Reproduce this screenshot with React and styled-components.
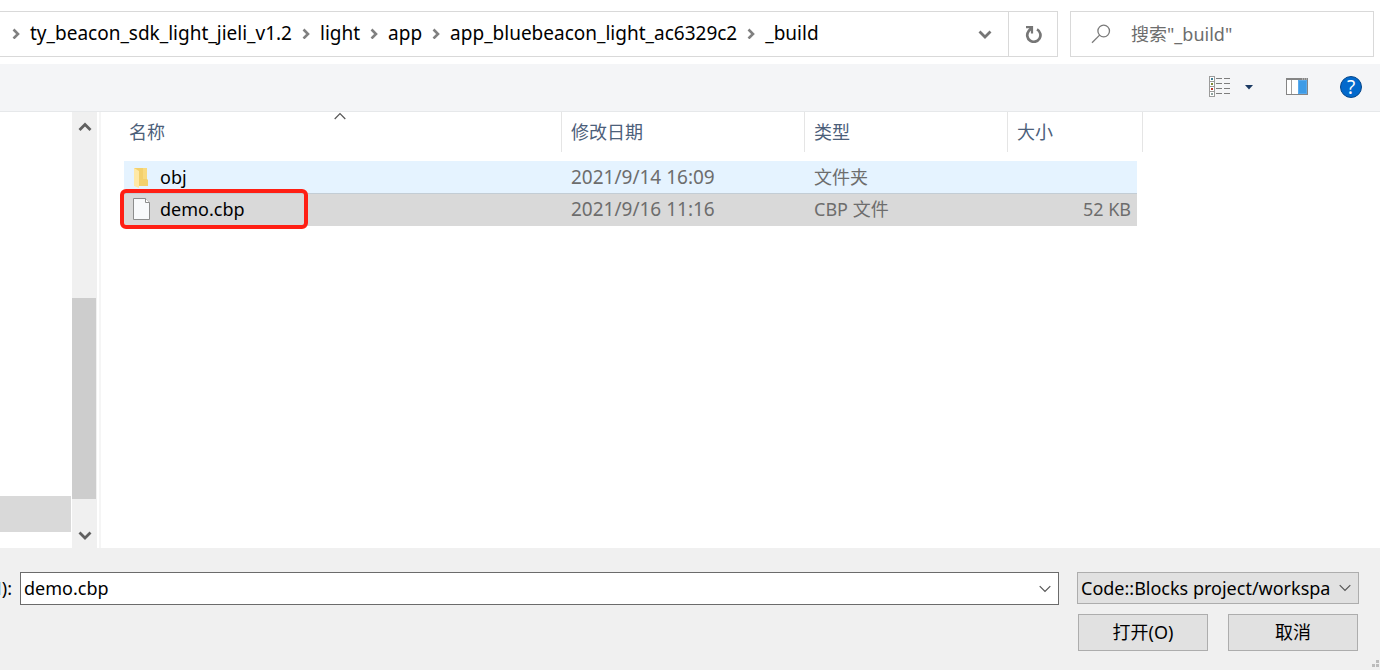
import React from "react";
import styled, { createGlobalStyle } from "styled-components";

const GlobalStyle = createGlobalStyle`
  * {
    box-sizing: border-box;
  }
  body {
    margin: 0;
    background: #fff;
  }
  body,
  input,
  select,
  button {
    font-family: "Noto Sans", "Noto Sans CJK SC", sans-serif;
    font-size: 18px;
    line-height: 24px;
    color: #000;
  }
`;

const StDialog = styled.div`
  min-height: 100vh;
  display: flex;
  flex-direction: column;
  overflow: hidden;
`;

const StTopBar = styled.header`
  display: flex;
  gap: 12px;
  padding: 11px 6px 7px 0;
`;

const StAddress = styled.div`
  flex: 1;
  min-width: 0;
  height: 46px;
  display: flex;
  border: 1px solid #d9d9d9;
  border-left: none;
`;

const StCrumbs = styled.nav`
  flex: 1;
  min-width: 0;
  display: flex;
  align-items: center;
  gap: 10px;
  padding: 0 0 2px 12px;
  overflow: hidden;
  svg {
    flex: none;
  }
`;

const StCrumb = styled.a`
  font-size: 19px;
  color: #000;
  text-decoration: none;
  white-space: nowrap;
`;

const StIconButton = styled.button`
  width: ${(props) => props.$width}px;
  flex: none;
  display: flex;
  align-items: center;
  justify-content: center;
  padding: 0;
  border: none;
  border-left: ${(props) => (props.$divided ? "1px solid #d9d9d9" : "none")};
  background: transparent;
`;

const StSearch = styled.label`
  width: 304px;
  height: 46px;
  display: flex;
  align-items: center;
  gap: 20px;
  padding-left: 20px;
  border: 1px solid #d9d9d9;
  svg {
    flex: none;
  }
`;

const StSearchInput = styled.input`
  flex: 1;
  min-width: 0;
  padding: 0;
  border: none;
  outline: none;
  background: transparent;
  &::placeholder {
    color: #6d6d6d;
    opacity: 1;
  }
`;

const StToolbar = styled.div`
  height: 48px;
  display: flex;
  align-items: center;
  justify-content: flex-end;
  padding: 0 5px 1px 0;
  background: #f4f5f7;
  border-bottom: 1px solid #e6e8ea;
`;

const StMain = styled.main`
  flex: 1;
  min-height: 436px;
  display: flex;
`;

const StSidebar = styled.aside`
  width: 72px;
  flex: none;
  display: flex;
  flex-direction: column;
  justify-content: flex-end;
  padding: 0 1px 16px 0;
`;

const StSelectedNode = styled.div`
  height: 36px;
  background: #d9d9d9;
`;

const StScrollbar = styled.div`
  width: 25px;
  flex: none;
  display: flex;
  flex-direction: column;
  align-items: stretch;
  background: #f0f0f0;
`;

const StScrollButton = styled.button`
  height: ${(props) => props.$height}px;
  display: flex;
  align-items: center;
  justify-content: center;
  padding: 0 0 1px;
  border: none;
  background: transparent;
`;

const StTrack = styled.div`
  flex: 1;
  display: flex;
  flex-direction: column;
  justify-content: flex-end;
  padding: 0 1px 24px 0;
`;

const StThumb = styled.div`
  height: 201px;
  background: #cdcdcd;
`;

const StFiles = styled.section`
  flex: 1;
  min-width: 0;
  margin-left: 2px;
  padding-left: 23px;
  border-left: 2px solid #f5f5f5;
`;

const StTable = styled.table`
  width: 1019px;
  table-layout: fixed;
  border-collapse: separate;
  border-spacing: 0;
`;

const StHeadCell = styled.th`
  position: relative;
  width: ${(props) => props.$width}px;
  height: 40px;
  padding: 0 0 0 ${(props) => props.$indent}px;
  border-right: 1px solid #e5e5e5;
  text-align: left;
  font-weight: normal;
  color: #4c607a;
`;

const StSortMark = styled.span`
  position: absolute;
  top: 0;
  left: 210px;
  display: flex;
`;

const StSpacer = styled.tr`
  height: 9px;
`;

const StRow = styled.tr`
  height: ${(props) => (props.$selected ? 33 : 32)}px;
  td {
    background: ${(props) => (props.$selected ? "#d9d9d9" : "#e5f3ff")};
    box-shadow: ${(props) => (props.$selected ? "inset 0 1px #c3cdd5" : "none")};
  }
`;

const StCell = styled.td`
  position: relative;
  padding: 0 0 1px 9px;
  white-space: nowrap;
  color: #6d6d6d;
`;

const StDateCell = styled(StCell)`
  font-size: 19px;
`;

const StSizeCell = styled(StCell)`
  padding-right: 6px;
  border-right: 6px solid transparent;
  background-clip: padding-box !important;
  text-align: right;
`;

const StFileName = styled.div`
  display: flex;
  align-items: center;
  gap: 9px;
  color: #000;
`;

const StHighlight = styled.span`
  position: absolute;
  top: -4px;
  left: -4px;
  width: 188px;
  height: 40px;
  border: 4px solid #ff1f14;
  border-radius: 6px;
`;

const StFooter = styled.footer`
  position: relative;
  height: 122px;
  display: flex;
  gap: 18px;
  padding: 24px 21px 0 0;
  background: #f0f0f0;
`;

const StNameField = styled.div`
  flex: 1;
  min-width: 0;
  display: flex;
  gap: 8px;
`;

const StNameLabel = styled.label`
  width: 12px;
  height: 33px;
  flex: none;
  display: flex;
  align-items: center;
  justify-content: flex-end;
  padding-bottom: 2px;
  overflow: hidden;
`;

const StCombo = styled.div`
  flex: 1;
  min-width: 0;
  height: 33px;
  display: flex;
  border: 1px solid #6b6b6b;
  background: #fff;
`;

const StNameInput = styled.input`
  flex: 1;
  min-width: 0;
  padding: 0 3px 2px;
  border: none;
  outline: none;
  background: transparent;
`;

const StActions = styled.div`
  width: 282px;
  flex: none;
  display: flex;
  flex-direction: column;
  gap: 10px;
`;

const StSelectWrap = styled.div`
  position: relative;
  svg {
    position: absolute;
    top: 12px;
    right: 8px;
    pointer-events: none;
  }
`;

const StSelect = styled.select`
  display: block;
  appearance: none;
  width: 100%;
  height: 32px;
  padding: 0 28px 0 3px;
  border: 1px solid #adadad;
  border-radius: 0;
  outline: none;
  background: #e1e1e1;
`;

const StButtons = styled.div`
  display: flex;
  gap: 20px;
  padding: 0 1px;
`;

const StButton = styled.button`
  flex: 1;
  height: 37px;
  padding: 0 0 2px;
  border: 1px solid #adadad;
  background: #e1e1e1;
`;

const StGrip = styled.svg`
  position: absolute;
  right: 1px;
  bottom: 2px;
`;

const StHelp = styled.span`
  width: 22px;
  height: 22px;
  display: flex;
  align-items: center;
  justify-content: center;
  border: 1px solid #07478a;
  border-radius: 50%;
  background: #0269cc;
  font-size: 19px;
  color: #fff;
`;

const crumbs = [
  "ty_beacon_sdk_light_jieli_v1.2",
  "light",
  "app",
  "app_bluebeacon_light_ac6329c2",
  "_build",
];

const files = [
  { name: "obj", date: "2021/9/14 16:09", type: "文件夹", size: "", folder: true },
  { name: "demo.cbp", date: "2021/9/16 11:16", type: "CBP 文件", size: "52 KB", selected: true },
];

function CrumbArrow() {
  return (
    <svg width="8" height="12" viewBox="0 0 8 12" fill="none">
      <path d="M1.5 2.5 6 7 1.5 11.5" stroke="#808080" strokeWidth="2.6" />
    </svg>
  );
}

function BoldChevron({ up, color }) {
  return (
    <svg width="14" height="10" viewBox="0 0 14 10" fill="none">
      <path
        d={up ? "M1.5 8 7 2.5 12.5 8" : "M1.5 2.5 7 8 12.5 2.5"}
        stroke={color}
        strokeWidth="2.8"
      />
    </svg>
  );
}

function ThinChevron({ up }) {
  return (
    <svg width="12" height="8" viewBox="0 0 12 8" fill="none">
      <path
        d={up ? "M.7 7 6 1.7 11.3 7" : "M.7 1.2 6 6.5 11.3 1.2"}
        stroke="#555"
        strokeWidth="1.2"
      />
    </svg>
  );
}

function RefreshIcon() {
  return (
    <svg width="20" height="18" viewBox="0 0 20 18" fill="none">
      <path
        d="M14 4.4A6.6 6.6 0 1 1 5.6 6.2L8.4 3"
        stroke="#767676"
        strokeWidth="2.7"
      />
      <path d="M3 2.2H9V8.6" stroke="#767676" strokeWidth="2.2" />
    </svg>
  );
}

function SearchIcon() {
  return (
    <svg width="20" height="20" viewBox="0 0 20 20" fill="none">
      <circle cx="12.7" cy="7" r="5.8" stroke="#7a7a7a" strokeWidth="1.3" />
      <path d="M8.6 11.1 1 18.7" stroke="#7a7a7a" strokeWidth="1.3" />
    </svg>
  );
}

function ViewIcon() {
  const marks = ["#3f7f95", "#7d8a34", "#c0392b", "#8fa3a0"];
  return (
    <svg width="22" height="22" viewBox="0 0 22 22">
      {marks.map((mark, i) => (
        <g key={mark}>
          <rect x=".5" y={i * 5 + 0.5} width="5" height="5" fill="#fff" stroke="#9b9b9b" />
          <rect x="2" y={i * 5 + 2} width="2" height="2" fill={mark} />
          <path d={`M7 ${i * 5 + 2.5}h6M15 ${i * 5 + 2.5}h6`} stroke="#7d7d7d" />
        </g>
      ))}
    </svg>
  );
}

function PreviewIcon() {
  return (
    <svg width="22" height="18" viewBox="0 0 22 18">
      <rect x=".5" y="1.5" width="21" height="15" fill="#fff" stroke="#858585" />
      <path d="M0 0H22V2H0Z" fill="#858585" />
      <path d="M16 1h1M18 1h1M20 1h1" stroke="#d8d8d8" />
      <path d="M5.5 2V16" stroke="#a0a0a0" />
      <path d="M12 2H21V16H12Z" fill="#3e9be6" />
      <path d="M12.5 2.5H20.5V15.5H12.5Z" fill="none" stroke="#5aaaec" />
    </svg>
  );
}

function FolderIcon() {
  return (
    <svg width="18" height="24" viewBox="0 0 18 24">
      <path d="M1 3H14V14L15 15V21H1Z" fill="#f3d06c" />
      <path d="M10 3H14V14H10Z" fill="#f8da80" />
      <path d="M1 3 6 6V23L1 21Z" fill="#ffe9a6" />
    </svg>
  );
}

function FileIcon() {
  return (
    <svg width="18" height="24" viewBox="0 0 18 24">
      <path d="M.5 1.5H12.5L16.5 5.5V22.5H.5Z" fill="#f8f9fb" stroke="#8c8c8c" />
      <path d="M12.5 1.5V5.5H16.5" fill="#fff" stroke="#8c8c8c" />
    </svg>
  );
}

export default function App() {
  return (
    <>
      <GlobalStyle />
      <StDialog>
        <StTopBar>
          <StAddress>
            <StCrumbs>
              {crumbs.map((crumb) => (
                <React.Fragment key={crumb}>
                  <CrumbArrow />
                  <StCrumb href="#">{crumb}</StCrumb>
                </React.Fragment>
              ))}
            </StCrumbs>
            <StIconButton $width={46} aria-label="历史记录">
              <BoldChevron color="#767676" />
            </StIconButton>
            <StIconButton $width={49} $divided aria-label="刷新">
              <RefreshIcon />
            </StIconButton>
          </StAddress>
          <StSearch>
            <SearchIcon />
            <StSearchInput type="text" placeholder={'搜索"_build"'} />
          </StSearch>
        </StTopBar>
        <StToolbar>
          <StIconButton $width={22} aria-label="视图">
            <ViewIcon />
          </StIconButton>
          <StIconButton $width={36} aria-label="更多选项">
            <svg width="8" height="5" viewBox="0 0 8 5">
              <path d="M0 0H8L4 4.5Z" fill="#1b3a63" />
            </svg>
          </StIconButton>
          <StIconButton $width={60} aria-label="预览窗格">
            <PreviewIcon />
          </StIconButton>
          <StIconButton $width={48} aria-label="帮助">
            <StHelp>?</StHelp>
          </StIconButton>
        </StToolbar>
        <StMain>
          <StSidebar>
            <StSelectedNode />
          </StSidebar>
          <StScrollbar>
            <StScrollButton $height={30} aria-label="向上滚动">
              <BoldChevron up color="#606060" />
            </StScrollButton>
            <StTrack>
              <StThumb />
            </StTrack>
            <StScrollButton $height={25} aria-label="向下滚动">
              <BoldChevron color="#606060" />
            </StScrollButton>
          </StScrollbar>
          <StFiles>
            <StTable>
              <thead>
                <tr>
                  <StHeadCell $width={438} $indent={5}>
                    名称
                    <StSortMark>
                      <ThinChevron up />
                    </StSortMark>
                  </StHeadCell>
                  <StHeadCell $width={243} $indent={9}>修改日期</StHeadCell>
                  <StHeadCell $width={203} $indent={9}>类型</StHeadCell>
                  <StHeadCell $width={135} $indent={9}>大小</StHeadCell>
                </tr>
              </thead>
              <tbody>
                <StSpacer />
                {files.map((file) => (
                  <StRow key={file.name} $selected={file.selected}>
                    <StCell>
                      <StFileName>
                        {file.folder ? <FolderIcon /> : <FileIcon />}
                        {file.name}
                      </StFileName>
                      {file.selected && <StHighlight />}
                    </StCell>
                    <StDateCell>{file.date}</StDateCell>
                    <StCell>{file.type}</StCell>
                    <StSizeCell>{file.size}</StSizeCell>
                  </StRow>
                ))}
              </tbody>
            </StTable>
          </StFiles>
        </StMain>
        <StFooter>
          <StNameField>
            <StNameLabel htmlFor="file-name">N):</StNameLabel>
            <StCombo>
              <StNameInput id="file-name" type="text" defaultValue="demo.cbp" />
              <StIconButton $width={26} aria-label="文件名列表">
                <ThinChevron />
              </StIconButton>
            </StCombo>
          </StNameField>
          <StActions>
            <StSelectWrap>
              <StSelect aria-label="文件类型">
                <option>Code::Blocks project/workspace files</option>
              </StSelect>
              <ThinChevron />
            </StSelectWrap>
            <StButtons>
              <StButton type="button">打开(O)</StButton>
              <StButton type="button">取消</StButton>
            </StButtons>
          </StActions>
          <StGrip width="8" height="8" viewBox="0 0 8 8">
            <path d="M5 0h3v3h-3zM1 4h3v3h-3zM5 4h3v3h-3z" fill="#bcbcbc" />
          </StGrip>
        </StFooter>
      </StDialog>
    </>
  );
}
